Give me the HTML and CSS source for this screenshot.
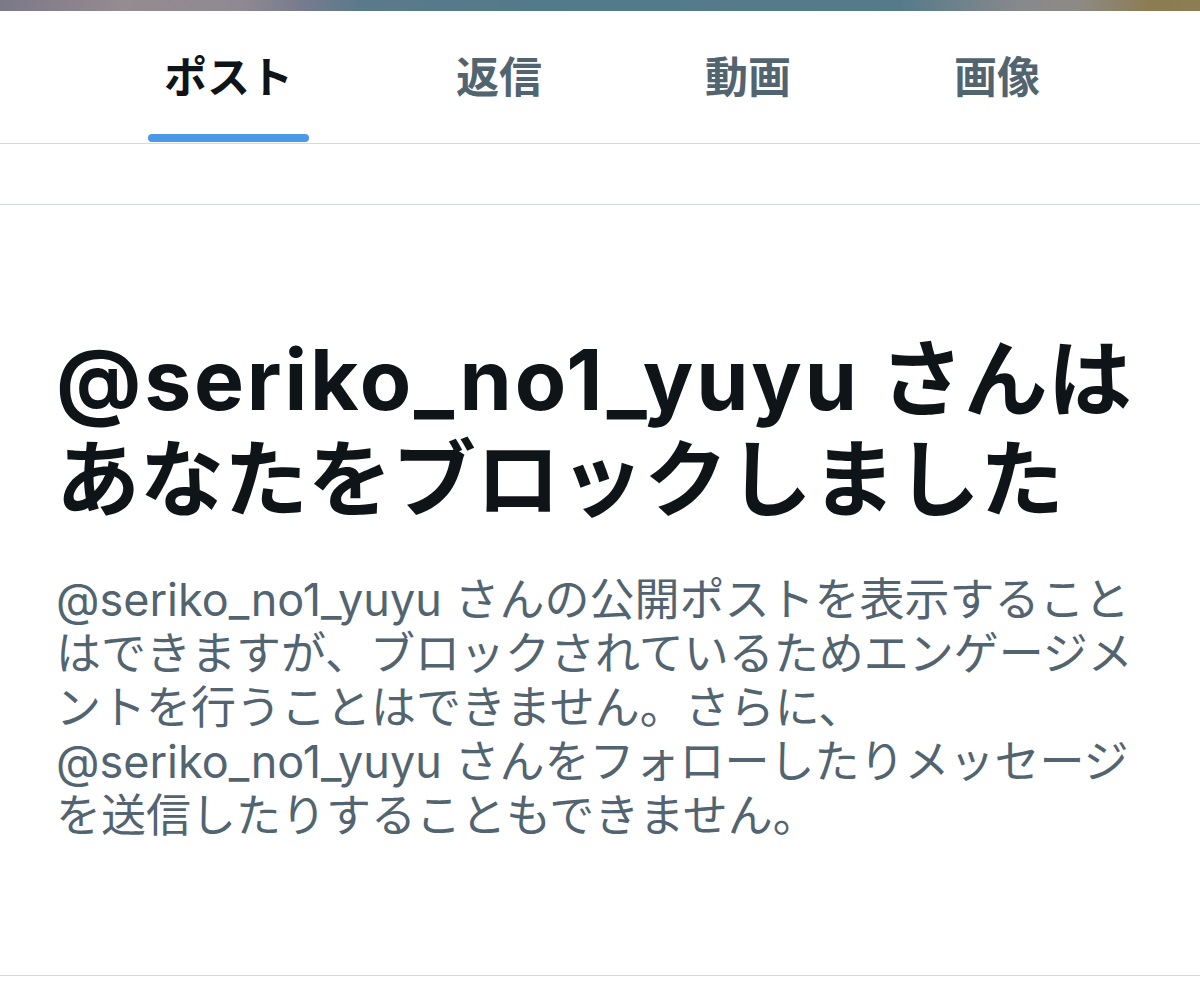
FILE: index.html
```html
<!DOCTYPE html>
<html lang="ja">
<head>
  <meta charset="UTF-8">
  <title>ブロックされています</title>
  <link rel="stylesheet" href="styles.css">
</head>
<body>

  <div class="banner-edge"></div>

  <nav class="tabs">
    <div class="tab active">
      <span class="label">ポスト</span>
      <span class="indicator"></span>
    </div>
    <div class="tab">
      <span class="label">返信</span>
      <span class="indicator"></span>
    </div>
    <div class="tab">
      <span class="label">動画</span>
      <span class="indicator"></span>
    </div>
    <div class="tab">
      <span class="label">画像</span>
      <span class="indicator"></span>
    </div>
  </nav>

  <div class="spacer"></div>

  <section class="blocked">
    <h2><span class="handle">@seriko_no1_yuyu</span> さんは<br>あなたをブロックしました</h2>
    <p>
      @seriko_no1_yuyu さんの公開ポストを表示すること<br>はできますが、ブロックされているためエンゲージメ<br>ントを行うことはできません。さらに、<br>@seriko_no1_yuyu さんをフォローしたりメッセージ<br>を送信したりすることもできません。
    </p>
  </section>

</body>
</html>
```

FILE: styles.css
```css
body {
  margin: 0;
  background: #fff;
  font-family: Inter, "Noto Sans CJK JP", sans-serif;
  color: #0f1419;
}

.banner-edge {
  height: 11px;
  background: linear-gradient(90deg, #7b7888 0%, #958b90 10%, #8f8a92 20%, #787b8e 25%, #5a7a8c 30%, #537a8a 45%, #557b8a 75%, #88898b 85%, #8c8a84 90%, #8d7c52 96%, #8c7d55 100%);
}

.tabs {
  display: flex;
  height: 132px;
  padding-left: 83px;
  border-bottom: 1px solid #d6dadb;
}

.tab {
  display: flex;
  flex-direction: column;
  padding: 45px 82px 0 81px;
  color: #536471;
}

.tab .label {
  font-size: 43px;
  font-weight: 700;
  line-height: 42px;
}

.tab .indicator {
  height: 8px;
  margin: 36px -16px 0;
  border-radius: 4px;
}

.tab.active {
  color: #0f1419;
}

.tab.active .indicator {
  background: #4a99e8;
}

.spacer {
  height: 60px;
  border-bottom: 1px solid #d6dadb;
}

.blocked {
  padding: 125px 40px 132px 56px;
  border-bottom: 1px solid #d6dadb;
}

.blocked h2 {
  margin: 0;
  font-size: 84px;
  line-height: 100px;
  font-weight: 700;
}

.blocked h2 .handle {
  letter-spacing: 2.8px;
}

.blocked p {
  margin: 43px 0 0;
  font-size: 45px;
  line-height: 54px;
  color: #536471;
  white-space: nowrap;
}
```
